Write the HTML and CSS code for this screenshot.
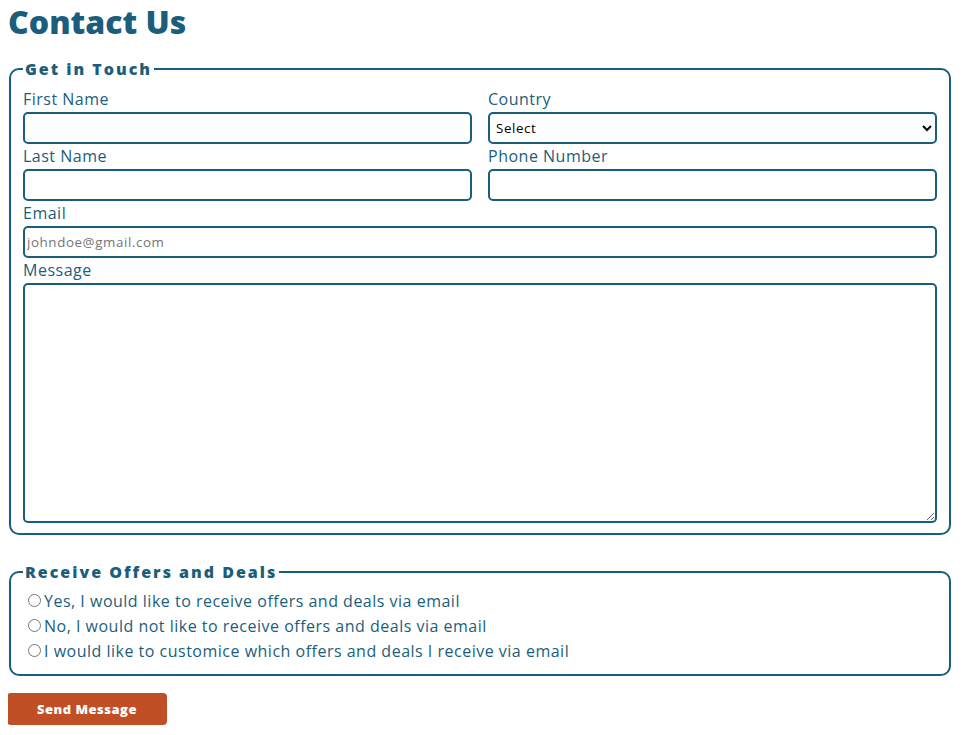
FILE: index.html
```html
<!DOCTYPE html>
<html lang="en">
<head>
<meta charset="utf-8">
<title>Contact Us</title>
<link rel="stylesheet" href="styles.css">
</head>
<body>
<h1 class="title">Contact Us</h1>
<form class="contact-form">
  <fieldset class="group touch">
    <legend class="group-legend">Get in Touch</legend>
    <div class="grid">
      <div class="field">
        <label class="label" for="first">First Name</label>
        <input class="input" id="first" type="text">
      </div>
      <div class="field">
        <label class="label" for="country">Country</label>
        <select class="input select" id="country">
          <option>Select</option>
        </select>
      </div>
      <div class="field">
        <label class="label" for="last">Last Name</label>
        <input class="input" id="last" type="text">
      </div>
      <div class="field">
        <label class="label" for="phone">Phone Number</label>
        <input class="input" id="phone" type="tel">
      </div>
      <div class="field wide">
        <label class="label" for="email">Email</label>
        <input class="input" id="email" type="email" placeholder="johndoe@gmail.com">
      </div>
      <div class="field wide">
        <label class="label" for="msg">Message</label>
        <textarea class="input textarea" id="msg"></textarea>
      </div>
    </div>
  </fieldset>
  <fieldset class="group offers">
    <legend class="group-legend">Receive Offers and Deals</legend>
    <label class="radio-row"><input class="radio" type="radio" name="offers">Yes, I would like to receive offers and deals via email</label>
    <label class="radio-row"><input class="radio" type="radio" name="offers">No, I would not like to receive offers and deals via email</label>
    <label class="radio-row"><input class="radio" type="radio" name="offers">I would like to customice which offers and deals I receive via email</label>
  </fieldset>
  <button class="send" type="button">Send Message</button>
</form>
</body>
</html>
```

FILE: styles.css
```css
body {
  margin: 0 8px;
  font-family: "Open Sans", "Liberation Sans", sans-serif;
  color: #1b5e7b;
  background: #fff;
}
.title {
  margin: 0;
  font-size: 32px;
  line-height: 44px;
  font-weight: 800;
  color: #1b5e7b;
}
.contact-form {
  display: flex;
  flex-direction: column;
  align-items: flex-start;
}
.group {
  align-self: stretch;
  margin: 15px 4px 0 1px;
  border: 2px solid #1b5e7b;
  border-radius: 10px;
  padding: 6px 12px 10px;
}
.touch {
  padding-top: 8px;
}
.offers {
  margin-top: 27px;
  padding-bottom: 11px;
}
.group-legend {
  padding: 0 2px;
  font-weight: 800;
  font-size: 16px;
  line-height: 20px;
  letter-spacing: 2px;
}
.grid {
  display: grid;
  grid-template-columns: 1fr 1fr;
  column-gap: 16px;
}
.field {
  display: flex;
  flex-direction: column;
}
.wide {
  grid-column: 1 / -1;
}
.label {
  font-size: 16px;
  line-height: 25px;
  height: 25px;
  letter-spacing: 0.5px;
}
.input {
  box-sizing: border-box;
  height: 32px;
  margin: 0;
  border: 2px solid #1b5e7b;
  border-radius: 5px;
  padding: 0 2px;
  font-family: "Open Sans", "Liberation Sans", sans-serif;
  font-size: 13.33px;
  letter-spacing: 0.6px;
  color: #000;
  background: #fff;
}
.input::placeholder {
  color: #757575;
}
.select {
  padding: 0 2px;
}
.textarea {
  height: 240px;
  resize: both;
}
.radio-row {
  display: flex;
  align-items: center;
  height: 25px;
  font-size: 16px;
  letter-spacing: 0.5px;
}
.radio {
  margin: 0 3px 0 5px;
  width: 13px;
  height: 13px;
}
.send {
  margin: 17px 0 10px -1px;
  width: 160px;
  height: 32px;
  border: 0;
  border-radius: 4px;
  background: #c14f25;
  color: #fff;
  font-family: "Open Sans", "Liberation Sans", sans-serif;
  font-weight: 800;
  font-size: 13px;
  letter-spacing: 0.5px;
}
```
